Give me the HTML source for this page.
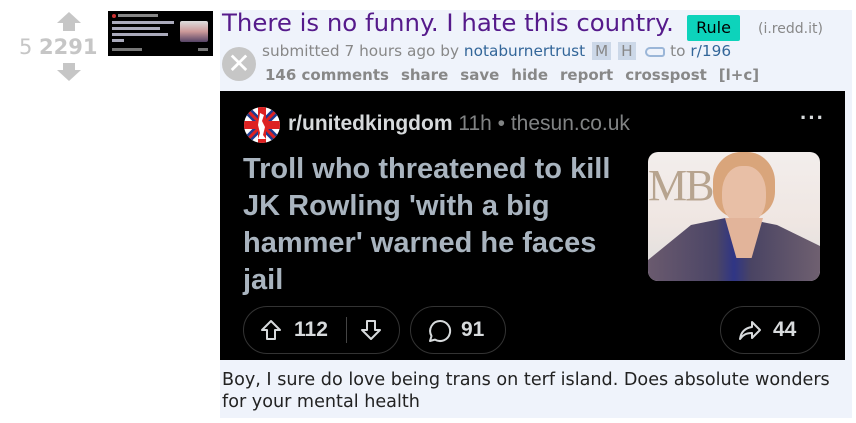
<!DOCTYPE html>
<html><head><meta charset="utf-8"><style>
*{margin:0;padding:0;box-sizing:border-box}
body{width:856px;height:423px;background:#fff;font-family:"DejaVu Sans",Verdana,sans-serif;position:relative;overflow:hidden}
.a{position:absolute}
.g{color:#c6c6c6}
.ent{left:220px;top:10px;width:632px;height:408px;background:#eff3fb}
.title{left:222px;top:8px;font-size:24.4px;color:#551a8b;white-space:nowrap}
.rule{left:687px;top:15px;height:26px;width:53px;background:#0dd3bb;border-radius:2px;color:#000;font-size:16px;text-align:center;line-height:26px}
.dom{left:758px;top:21px;font-size:14px;color:#888}
.sub{left:262px;top:42px;font-size:15.3px;color:#888;white-space:nowrap}
.sub b{font-weight:normal;color:#369}
.tag{display:inline-block;background:#ccd8e8;color:#888;padding:0 3px;margin-left:2px}
.btns{left:265px;top:66px;font-size:15px;font-weight:bold;color:#888;white-space:nowrap}
.btns span{margin-right:12px}
.img{left:220px;top:91px;width:625px;height:269px;background:#000;font-family:"Liberation Sans",Arial,sans-serif}
.body{left:222px;top:369px;font-size:17.6px;color:#222;line-height:22px}
.pill{position:absolute;border:1px solid #333;border-radius:24px;height:48px;color:#d7dadc;font-size:21px;font-weight:bold;line-height:46px}
.pill svg{position:absolute;top:12px}
</style></head><body>
<div class="a" style="left:57px;top:12px;width:0;height:0;border-left:12px solid transparent;border-right:12px solid transparent;border-bottom:11px solid #c6c6c6"></div>
<div class="a" style="left:63px;top:22px;width:12px;height:9px;background:#c6c6c6"></div>
<div class="a" style="left:63px;top:63px;width:12px;height:8px;background:#c6c6c6"></div>
<div class="a" style="left:57px;top:70px;width:0;height:0;border-left:12px solid transparent;border-right:12px solid transparent;border-top:11px solid #c6c6c6"></div>
<div class="a g" style="left:19px;top:35px;font-size:21px">5 <b>2291</b></div>
<div class="a" style="left:108px;top:11px;width:105px;height:45px;background:#000;overflow:hidden">
 <div class="a" style="left:4px;top:3px;width:4px;height:4px;border-radius:50%;background:#c33"></div>
 <div class="a" style="left:10px;top:3px;width:40px;height:3px;background:#888"></div>
 <div class="a" style="left:4px;top:10px;width:62px;height:3px;background:#aab"></div>
 <div class="a" style="left:4px;top:16px;width:48px;height:3px;background:#aab"></div>
 <div class="a" style="left:4px;top:22px;width:56px;height:3px;background:#aab"></div>
 <div class="a" style="left:4px;top:28px;width:12px;height:3px;background:#aab"></div>
 <div class="a" style="left:72px;top:10px;width:28px;height:21px;border-radius:2px;background:linear-gradient(#ddd,#c99 50%,#546 100%)"></div>
 <div class="a" style="left:4px;top:37px;width:30px;height:3px;background:#777"></div>
 <div class="a" style="left:90px;top:37px;width:10px;height:3px;background:#777"></div>
</div>
<div class="a ent"></div>
<div class="a title">There is no funny. I hate this country.</div>
<div class="a rule">Rule</div>
<div class="a dom">(i.redd.it)</div>
<div class="a" style="left:222px;top:47px;width:34px;height:34px;border-radius:50%;background:#c6c6c6;color:#fff;font-size:28px;font-weight:bold;text-align:center;line-height:33px">✕</div>
<div class="a sub">submitted 7 hours ago by <b>notaburnertrust</b> <span class="tag">M</span> <span class="tag">H</span> &nbsp;<span style="display:inline-block;width:20px;height:10px;border:2px solid #9bb6d8;border-radius:5px 3px 3px 5px;vertical-align:middle"></span> to <b>r/196</b></div>
<div class="a btns"><span>146 comments</span><span>share</span><span>save</span><span>hide</span><span>report</span><span>crosspost</span><span>[l+c]</span></div>
<div class="a img">
 <svg class="a" style="left:24px;top:16px" width="36" height="36" viewBox="0 0 36 36"><defs><clipPath id="c"><circle cx="18" cy="18" r="18"/></clipPath></defs><g clip-path="url(#c)"><rect width="36" height="36" fill="#fff"/><path d="M0 0L36 36M36 0L0 36" stroke="#1f3a8f" stroke-width="8"/><path d="M0 0L36 36M36 0L0 36" stroke="#d22" stroke-width="3"/><rect x="14" width="8" height="36" fill="#d22"/><rect y="14" width="36" height="8" fill="#d22"/><path d="M16 6l4 2-2 6 3 6-2 8 3 4h-8l2-6-2-8z" fill="#fff"/></g></svg>
 <div class="a" style="left:68px;top:21px;font-size:21px;color:#d7dadc;white-space:nowrap"><span style="font-weight:600">r/unitedkingdom</span> <span style="color:#818384">11h • thesun.co.uk</span></div>
 <div class="a" style="left:580px;top:14px;font-size:22px;color:#d7dadc;font-weight:bold;letter-spacing:1px">···</div>
 <div class="a" style="left:23px;top:60px;font-size:29px;line-height:37px;font-weight:bold;color:#a9b4bf;width:390px">Troll who threatened to kill JK Rowling 'with a big hammer' warned he faces jail</div>
 <div class="a" style="left:428px;top:61px;width:172px;height:129px;border-radius:10px;overflow:hidden;background:linear-gradient(180deg,#f3eeec 0%,#efe6e2 55%,#ddd 100%)">
  <div class="a" style="left:0;top:8px;font-family:'Liberation Serif',serif;font-size:44px;color:#b7a48f;letter-spacing:-2px">MB&nbsp;&nbsp;&nbsp;D</div>
  <div class="a" style="left:65px;top:0;width:62px;height:66px;border-radius:45% 45% 40% 40%;background:#d9a57b"></div>
  <div class="a" style="left:74px;top:14px;width:44px;height:58px;border-radius:45%;background:#e8bfa6"></div>
  <div class="a" style="left:0;top:66px;width:172px;height:70px;background:linear-gradient(90deg,#6a5a6e,#4b4566 40%,#2f3585 50%,#4a4463 60%,#6f6070);clip-path:polygon(0 60%,25% 10%,45% 0,55% 0,75% 10%,100% 40%,100% 100%,0 100%)"></div>
  <div class="a" style="left:77px;top:66px;width:38px;height:40px;background:#e2b49a;clip-path:polygon(0 0,100% 0,70% 100%,30% 100%)"></div>
 </div>
 <div class="pill" style="left:23px;top:215px;width:157px">
  <svg style="left:16px" width="22" height="22" viewBox="0 0 22 22"><path d="M11 2L2 11h5v9h8v-9h5z" fill="none" stroke="#d7dadc" stroke-width="2" stroke-linejoin="round"/></svg>
  <span style="position:absolute;left:50px">112</span><span style="position:absolute;left:102px;top:10px;width:1px;height:26px;background:#444"></span>
  <svg style="left:116px" width="22" height="22" viewBox="0 0 22 22"><path d="M11 20L2 11h5V2h8v9h5z" fill="none" stroke="#d7dadc" stroke-width="2" stroke-linejoin="round"/></svg></div>
 <div class="pill" style="left:190px;top:215px;width:96px">
  <svg style="left:17px" width="24" height="24" viewBox="0 0 24 24"><path d="M12 2a10 10 0 1 1-5 18.6L2 22l1.5-5A10 10 0 0 1 12 2z" fill="none" stroke="#d7dadc" stroke-width="2" stroke-linejoin="round"/></svg>
  <span style="position:absolute;left:50px">91</span></div>
 <div class="pill" style="left:500px;top:215px;width:100px">
  <svg style="left:17px" width="24" height="24" viewBox="0 0 24 24"><path d="M14 3l8 8-8 8v-5c-6 0-9 2-12 6 1-7 5-11 12-12z" fill="none" stroke="#d7dadc" stroke-width="2" stroke-linejoin="round"/></svg>
  <span style="position:absolute;left:52px">44</span></div>
</div>
<div class="a body">Boy, I sure do love being trans on terf island. Does absolute wonders<br>for your mental health</div>
</body></html>
